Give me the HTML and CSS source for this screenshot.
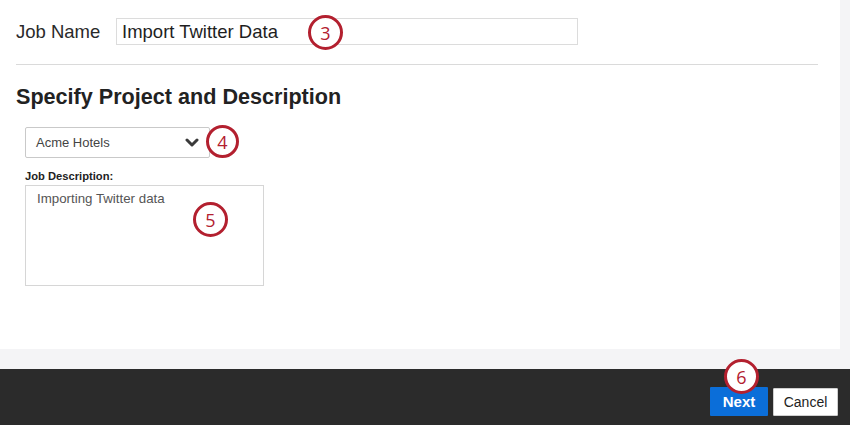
FILE: index.html
```html
<!DOCTYPE html>
<html>
<head>
<meta charset="utf-8">
<link rel="stylesheet" href="styles.css">
</head>
<body>
<div class="page">
  <div class="panel">
    <div class="job-row">
      <span class="job-label">Job Name</span>
      <div class="job-input">Import Twitter Data</div>
    </div>
    <div class="divider"></div>
    <h2 class="section-title">Specify Project and Description</h2>
    <div class="select">
      <span>Acme Hotels</span>
      <svg class="chevron" width="14" height="10" viewBox="0 0 14 10"><polyline points="2,2 7,7 12,2" fill="none" stroke="#3a3a3a" stroke-width="3" stroke-linecap="round" stroke-linejoin="round"/></svg>
    </div>
    <div class="desc-label">Job Description:</div>
    <div class="textarea">Importing Twitter data</div>
  </div>
  <div class="spacer"></div>
  <div class="footer">
    <button class="btn btn-next">Next</button>
    <button class="btn btn-cancel">Cancel</button>
  </div>
  <div class="callout c3">3</div>
  <div class="callout c4">4</div>
  <div class="callout c5">5</div>
  <div class="callout c6">6</div>
</div>
</body>
</html>
```
FILE: styles.css
```css
* { box-sizing: border-box; }
html, body { margin: 0; padding: 0; }
body {
  background: #f4f4f6;
  font-family: "Liberation Sans", Arial, sans-serif;
  color: #222;
}
.page {
  position: relative;
  width: 850px;
  height: 425px;
  display: flex;
  flex-direction: column;
  overflow: hidden;
}
.panel {
  width: 840px;
  height: 349px;
  background: #fff;
  padding: 18px 0 0 16px;
  display: flex;
  flex-direction: column;
  align-items: flex-start;
}
.job-row {
  display: flex;
  align-items: center;
  height: 27px;
}
.job-label {
  width: 100px;
  font-size: 18.5px;
  color: #2a2a2a;
}
.job-input {
  width: 462px;
  height: 27px;
  border: 1px solid #dcdcdc;
  font-size: 18.5px;
  line-height: 25px;
  padding-left: 5px;
  color: #1e1e1e;
}
.divider {
  width: 802px;
  height: 1px;
  background: #dadada;
  margin-top: 19px;
}
.section-title {
  margin: 20px 0 0 0;
  font-size: 21.6px;
  line-height: 24px;
  font-weight: bold;
  color: #222;
}
.select {
  margin: 18px 0 0 9px;
  width: 185px;
  height: 31px;
  border: 1px solid #c9c9c9;
  border-radius: 2px;
  display: flex;
  align-items: center;
  justify-content: space-between;
  padding: 0 10px 0 10px;
  font-size: 13px;
  color: #444;
}
.chevron { margin-top: 1px; }
.desc-label {
  margin: 12px 0 0 9px;
  font-size: 11.2px;
  font-weight: bold;
  color: #222;
  line-height: 13px;
}
.textarea {
  margin: 2px 0 0 9px;
  width: 239px;
  height: 101px;
  border: 1px solid #d6d6d6;
  padding: 5px 11px;
  font-size: 13.3px;
  color: #555;
  line-height: 16px;
}
.spacer { height: 20px; }
.footer {
  flex: 1;
  background: #2b2b2b;
  display: flex;
  align-items: flex-end;
  justify-content: flex-end;
  gap: 5px;
  padding: 0 12px 9px 0;
}
.btn {
  font-family: "Liberation Sans", Arial, sans-serif;
  font-size: 14px;
  height: 29px;
  border-radius: 1px;
  padding: 0;
}
.btn-next {
  width: 58px;
  background: #0b6ed9;
  color: #fff;
  border: none;
  font-weight: bold;
  font-size: 15px;
}
.btn-cancel {
  width: 65px;
  height: 28px;
  background: #fff;
  color: #222;
  border: 1px solid #cfcfcf;
}
.callout {
  position: absolute;
  width: 35px;
  height: 35px;
  border: 3px solid #b3202f;
  border-radius: 50%;
  background: #fff;
  color: #b3202f;
  font-family: "Open Sans", sans-serif;
  font-size: 18px;
  display: flex;
  align-items: center;
  justify-content: center;
}
.c3 { left: 308px; top: 15px; }
.c4 { left: 206px; top: 125px; width: 33px; height: 33px; }
.c5 { left: 193px; top: 202px; }
.c6 { left: 724px; top: 359px; }
```
